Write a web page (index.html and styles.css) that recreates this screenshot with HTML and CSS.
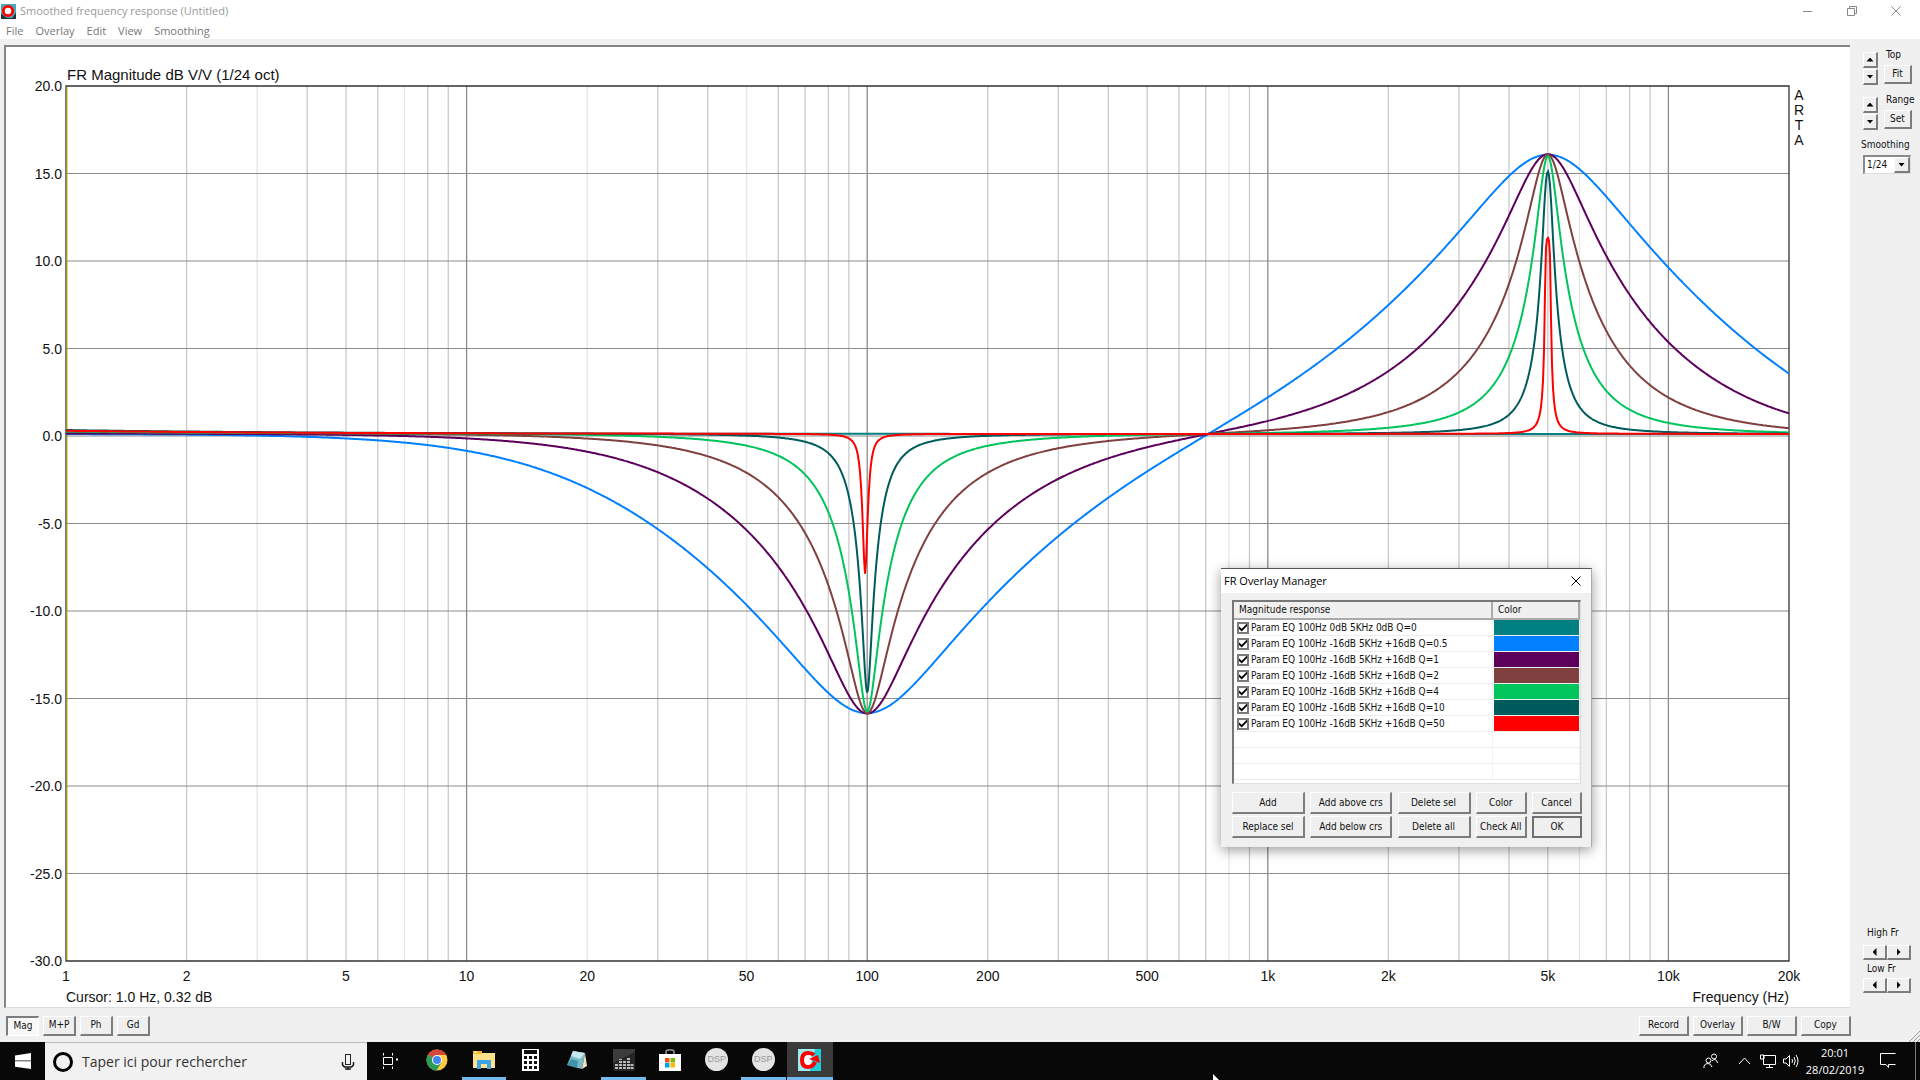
FILE: index.html
```
<!DOCTYPE html>
<html lang="en">
<head>
<meta charset="utf-8">
<title>Smoothed frequency response (Untitled)</title>
<link rel="stylesheet" href="styles.css">
</head>
<body>
<header class="titlebar">
  <svg class="app-icon" viewBox="0 0 16 16"><rect width="16" height="16" fill="#4aa8bf"/><path d="M0 10V16H16V9L12 15H6Z" fill="#26343d"/><circle cx="7.500" cy="7.500" r="5" fill="#fff" stroke="#f00" stroke-width="3"/></svg>
  <h1>Smoothed frequency response (Untitled)</h1>
  <div class="window-buttons">
    <button aria-label="Minimize"><svg viewBox="0 0 10 10"><path d="M0 5.500H9"/></svg></button>
    <button aria-label="Restore"><svg viewBox="0 0 10 10"><path d="M.5 2.500H7.500V9.500H.5ZM2.500 2.500V.5H9.500V7.500H7.500"/></svg></button>
    <button aria-label="Close"><svg viewBox="0 0 10 10"><path d="M.5 .5L9.500 9.500M9.500 .5L.5 9.500"/></svg></button>
  </div>
</header>
<nav class="menubar">
  <button>File</button><button>Overlay</button><button>Edit</button><button>View</button><button>Smoothing</button>
</nav>
<main class="workspace">
  <section class="left">
    <div class="chart-frame"><svg id="chart" role="img" aria-label="Frequency response"></svg></div>
    <div class="toolbar">
      <button class="btn pressed">Mag</button><button class="btn">M+P</button><button class="btn">Ph</button><button class="btn">Gd</button>
      <span class="spacer"></span>
      <button class="btn wide">Record</button><button class="btn wide">Overlay</button><button class="btn wide">B/W</button><button class="btn wide">Copy</button>
    </div>
  </section>
  <aside class="side">
    <div class="adjust">
      <div class="spin"><button class="btn" aria-label="Top up"><i class="up"></i></button><button class="btn" aria-label="Top down"><i class="down"></i></button></div>
      <div class="adjust-main"><span>Top</span><button class="btn">Fit</button></div>
    </div>
    <div class="adjust">
      <div class="spin"><button class="btn" aria-label="Range up"><i class="up"></i></button><button class="btn" aria-label="Range down"><i class="down"></i></button></div>
      <div class="adjust-main"><span>Range</span><button class="btn">Set</button></div>
    </div>
    <label class="smooth-label" for="smooth">Smoothing</label>
    <div class="combo"><select id="smooth"><option>1/24</option><option>1/12</option><option>1/6</option></select><span class="btn"><i class="down"></i></span></div>
    <div class="pair push">
      <span>High Fr</span>
      <div><button class="btn" aria-label="High left"><i class="lt"></i></button><button class="btn" aria-label="High right"><i class="rt"></i></button></div>
    </div>
    <div class="pair">
      <span>Low Fr</span>
      <div><button class="btn" aria-label="Low left"><i class="lt"></i></button><button class="btn" aria-label="Low right"><i class="rt"></i></button></div>
    </div>
    <svg class="grip" viewBox="0 0 12 12"><path d="M1 12L12 1M5 12L12 5M9 12L12 9"/></svg>
  </aside>
</main>

<section class="dialog" role="dialog" aria-labelledby="dlg-title">
  <div class="dialog-title"><h2 id="dlg-title">FR Overlay Manager</h2><button aria-label="Close dialog"><svg viewBox="0 0 10 10"><path d="M.5 .5L9.500 9.500M9.500 .5L.5 9.500"/></svg></button></div>
  <div class="list">
    <table>
      <thead><tr><th class="name">Magnitude response</th><th>Color</th></tr></thead>
      <tbody>
        <tr><td><label><input type="checkbox" checked>Param EQ 100Hz 0dB 5KHz 0dB Q=0</label></td><td><span class="swatch q0"></span></td></tr>
        <tr><td><label><input type="checkbox" checked>Param EQ 100Hz -16dB 5KHz +16dB Q=0.5</label></td><td><span class="swatch q05"></span></td></tr>
        <tr><td><label><input type="checkbox" checked>Param EQ 100Hz -16dB 5KHz +16dB Q=1</label></td><td><span class="swatch q1"></span></td></tr>
        <tr><td><label><input type="checkbox" checked>Param EQ 100Hz -16dB 5KHz +16dB Q=2</label></td><td><span class="swatch q2"></span></td></tr>
        <tr><td><label><input type="checkbox" checked>Param EQ 100Hz -16dB 5KHz +16dB Q=4</label></td><td><span class="swatch q4"></span></td></tr>
        <tr><td><label><input type="checkbox" checked>Param EQ 100Hz -16dB 5KHz +16dB Q=10</label></td><td><span class="swatch q10"></span></td></tr>
        <tr><td><label><input type="checkbox" checked>Param EQ 100Hz -16dB 5KHz +16dB Q=50</label></td><td><span class="swatch q50"></span></td></tr>
        <tr><td></td><td></td></tr>
        <tr><td></td><td></td></tr>
        <tr><td></td><td></td></tr>
      </tbody>
    </table>
  </div>
  <div class="dialog-buttons">
    <button class="btn">Add</button><button class="btn">Add above crs</button><button class="btn">Delete sel</button><button class="btn">Color</button><button class="btn">Cancel</button>
    <button class="btn">Replace sel</button><button class="btn">Add below crs</button><button class="btn">Delete all</button><button class="btn">Check All</button><button class="btn default">OK</button>
  </div>
</section>

<footer class="taskbar">
  <button class="start" aria-label="Start"><svg width="16" height="16" viewBox="0 0 16 16"><path fill="#fff" d="M0 2.500L16 0V7.500H0ZM0 8.300H16V16L0 13.800Z"/></svg></button>
  <label class="search">
    <svg width="22" height="22" viewBox="0 0 22 22"><circle cx="11" cy="11" r="8.500" fill="none" stroke="#000" stroke-width="3"/></svg>
    <input type="text" placeholder="Taper ici pour rechercher" aria-label="Taper ici pour rechercher">
    <svg width="14" height="16" viewBox="0 0 14 16" fill="none" stroke="#222"><rect x="4.500" y=".5" width="5" height="10"/><path d="M1.500 8V10.500Q2 13 5 13H9Q12 13 12.500 10.500V8M7 13V16M4 15H10" stroke-width="1.500"/></svg>
  </label>
  <button class="task-view" aria-label="Task view"><svg width="17" height="16" viewBox="0 0 17 16" fill="none" stroke="#fff"><path d="M1.500 4.500H10.500V11.500H1.500ZM1.500 0V2.500M10.500 2.500V0M1.500 16V13.500M10.500 13.500V16"/><path d="M14 6.500H16" stroke-width="2"/></svg></button>
  <div class="apps">
    <button aria-label="Chrome"><svg width="22" height="22" viewBox="0 0 22 22"><circle cx="11" cy="11" r="10.500" fill="#fc4"/><path d="M11 11L1.900 5.700A10.500 10.500 0 0 1 20.200 6H11Z" fill="#d5453a"/><path d="M11 11L1.900 5.700A10.500 10.500 0 0 0 10.500 21.500L15.500 13.500Z" fill="#2c9a59"/><circle cx="11" cy="11" r="5" fill="#fff"/><circle cx="11" cy="11" r="4" fill="#4285f4"/></svg></button>
    <button class="open" aria-label="Explorer"><svg width="22" height="20" viewBox="0 0 22 20"><path d="M0 1H9V3H22V18H0Z" fill="#fde28b"/><path d="M0 1H9V4H0Z" fill="#f4bd23"/><path d="M1 2H4" stroke="#fff"/><path d="M4 10H18V19H14V14H8V19H4Z" fill="#3aa5e4"/></svg></button>
    <button aria-label="Calculator"><svg width="17" height="22" viewBox="0 0 17 22"><rect width="17" height="22" fill="#fff"/><path d="M2 1H15V5H2Z" fill="#111"/><path d="M2 8.500H16M2 13.500H16M2 18.500H16" stroke="#111" stroke-width="3" stroke-dasharray="3 2"/></svg></button>
    <button aria-label="Notes"><svg width="22" height="22" viewBox="0 0 22 22"><path d="M7 2L19 4L16 20L1 16Z" fill="#79bccb"/><path d="M7 2L19 4L14 10L5 7Z" fill="#c6e8ef"/><path d="M19 4L21 17L16 20Z" fill="#eee3bd"/><path d="M5 10L12 12L11 19L1 16Z" fill="#4292aa"/></svg></button>
    <button class="open" aria-label="Equalizer"><svg width="22" height="22" viewBox="0 0 22 22"><rect width="22" height="22" rx="2" fill="#252627"/><path d="M0 0H22V3L0 14Z" fill="#3b3c3d"/><path d="M3.500 20V14M7.500 20V10M11.500 20V12M15.500 20V9M19 20V14" stroke="#bbb" stroke-width="3" stroke-dasharray="2 1"/></svg></button>
    <button aria-label="Store"><svg width="22" height="22" viewBox="0 0 22 22"><path d="M7 6V3Q7 1 9 1H13Q15 1 15 3V6" fill="none" stroke="#999" stroke-width="1.500"/><path d="M0 5H22V22H0Z" fill="#fff"/><path d="M6 9H10.500V13.500H6Z" fill="#f25022"/><path d="M11.500 9H16V13.500H11.500Z" fill="#7fba00"/><path d="M6 14H10.500V18.500H6Z" fill="#00a4ef"/><path d="M11.500 14H16V18.500H11.500Z" fill="#ffb900"/></svg></button>
    <button class="dsp"><span>DSP</span></button>
    <button class="dsp open"><span>DSP</span></button>
    <button class="open active" aria-label="ARTA"><svg width="23" height="22" viewBox="0 0 23 22"><rect width="23" height="22" fill="#20cdd8"/><path d="M0 0H17L12 22H0Z" fill="#9eeef0"/><path d="M6 5H13V17H6Z" fill="#fff"/><path d="M16 6Q14 4 10 4Q4 4 4 11Q4 18 10 18Q15 18 17 13" fill="none" stroke="#f00" stroke-width="4"/><path d="M11 10L20 6L22 14Z" fill="#f00"/></svg></button>
  </div>
  <svg class="pointer" width="8" height="6" viewBox="0 0 8 6"><path d="M0 0L6 6H0Z" fill="#fff"/></svg>
  <div class="tray">
    <button aria-label="People"><svg width="16" height="16" viewBox="0 0 16 16"><circle cx="5.500" cy="7.500" r="2.500"/><circle cx="11" cy="3.500" r="2.500"/><path d="M1 15V13Q2 10.500 5 10.500Q8 10.500 9 14M9 8Q10 6.500 12 6.500Q14 7 14.500 10"/></svg></button>
    <button aria-label="Hidden icons"><svg width="13" height="16" viewBox="0 0 13 16"><path d="M1 11L6.500 5L12 11"/></svg></button>
    <button aria-label="Network"><svg width="16" height="16" viewBox="0 0 16 16"><path d="M3.500 2.500H15.500V11.500H3.500ZM9.500 11.500V14.500M6 14.500H13M.5 2V6H4V2Z"/></svg></button>
    <button aria-label="Volume"><svg width="16" height="16" viewBox="0 0 16 16"><path d="M.5 6H3L6.500 2.500V13.500L3 10H.5ZM9 6Q10 8 9 10M11 4Q13.500 8 11 12M13 2Q17 8 13 14"/></svg></button>
    <time class="clock"><span>20:01</span><span>28/02/2019</span></time>
    <button class="action" aria-label="Notifications"><svg width="16" height="16" viewBox="0 0 16 16"><path d="M15.500 .5H.5V11.500H6L8.500 14.500V11.500H15.500"/></svg></button>
  </div>
</footer>
<script src="chart.js"></script>
</body>
</html>
```

FILE: styles.css
```
* { box-sizing: border-box; }
body {
  margin: 0;
  height: 100vh;
  display: flex;
  flex-direction: column;
  background: #f0f0f0;
  color: #111;
  font: 11px/14px "DejaVu Sans Condensed", "DejaVu Sans", sans-serif;
  overflow: hidden;
}
button, input, select { font: inherit; color: inherit; margin: 0; padding: 0; border: 0; background: none; border-radius: 0; }
h1, h2 { margin: 0; font-weight: normal; }
svg { display: block; }

.titlebar, .menubar { background: #fff; display: flex; font: 12px/16px "Open Sans", sans-serif; }
.titlebar { height: 22px; align-items: center; padding: 0 2px 0 1px; gap: 4px; color: #999; }
.titlebar h1 { font: inherit; font-size: 11px; }
.app-icon { width: 15px; height: 15px; }
.window-buttons { margin-left: auto; display: flex; }
.window-buttons button { width: 44px; height: 20px; display: grid; place-items: center; }
.window-buttons svg { width: 10px; height: 10px; fill: none; stroke: #888; }
.menubar { height: 17px; padding-left: 6px; gap: 12px; color: #777; font-size: 11px; }

.workspace { flex: 1; min-height: 0; display: flex; }
.left { flex: 1; min-width: 0; display: flex; flex-direction: column; padding: 6px 0 0 4px; }
.chart-frame {
  flex: 1; min-height: 0; background: #fff;
  border: 2px solid #858585; border-right: 0; border-bottom: 1px solid #ddd;
}
.chart-frame svg { width: 100%; height: 100%; }
.chart-frame text { font-family: "Liberation Sans", Arial, sans-serif; font-size: 14px; fill: #111; }
.chart-frame .chart-title { font-size: 15px; }
.toolbar { height: 34px; display: flex; align-items: center; gap: 4px; padding: 1px 0 0 2px; }
.toolbar .btn { width: 33px; height: 20px; }
.toolbar .btn.wide { width: 50px; }
.toolbar .btn:last-child { margin-right: -1px; }
.spacer { flex: 1; }

.btn {
  background: #efefef;
  border: 1px solid #fff;
  border-right: 2px solid #7d7d7d;
  border-bottom: 2px solid #7d7d7d;
  display: grid; place-items: center;
  white-space: nowrap;
  font-size: 10px; line-height: 12px;
}
.btn.pressed { background: #f8f8f8; border: 1px solid #fff; border-top: 2px solid #7d7d7d; border-left: 2px solid #7d7d7d; }
.btn.default { border: 2px solid #707070; }

.side { width: 70px; padding: 13px 9px 0 13px; display: flex; flex-direction: column; position: relative; font-size: 10px; }
.adjust { display: flex; gap: 6px; height: 45px; }
.spin { display: flex; flex-direction: column; gap: 1px; width: 15px; flex: none; }
.spin .btn { height: 16px; }
.adjust-main { display: flex; flex-direction: column; align-items: flex-start; line-height: 13px; margin-top: -4px; }
.adjust-main span { padding-left: 2px; height: 17px; }
.adjust-main .btn { width: 28px; height: 19px; }
.smooth-label { margin: -3px 0 0 -2px; height: 16px; line-height: 12px; }
.combo { display: grid; grid-template-columns: 1fr 16px; height: 19px; background: #fff; border: 2px solid #8a8a8a; border-right: 1px solid #ddd; border-bottom: 1px solid #ddd; }
.combo select { appearance: none; grid-area: 1 / 1 / 2 / 3; padding-left: 2px; }
.combo .btn { grid-area: 1 / 2; pointer-events: none; }
.pair span { display: block; padding-left: 4px; height: 16px; }
.pair div { display: flex; }
.pair .btn { width: 24px; height: 15px; }
.pair:last-of-type { height: 80px; }
.push { margin-top: auto; height: 36px; }
.push span { height: 19px; }
i { display: block; background: #000; }
i.up { width: 7px; height: 4px; clip-path: polygon(50% 0, 100% 100%, 0 100%); }
i.down { width: 7px; height: 4px; clip-path: polygon(0 0, 100% 0, 50% 100%); }
i.lt { width: 4px; height: 8px; clip-path: polygon(0 50%, 100% 0, 100% 100%); }
i.rt { width: 4px; height: 8px; clip-path: polygon(0 0, 100% 50%, 0 100%); }
.grip { position: absolute; right: 0; bottom: 0; width: 12px; height: 12px; stroke: #999; fill: none; }

.dialog {
  position: absolute; left: 1221px; top: 568px; width: 371px;
  background: #f0f0f0; border-top: 1px solid #555; border-right: 1px solid #aaa;
  box-shadow: 0 3px 12px rgba(0, 0, 0, .4);
  padding-bottom: 9px;
}
.dialog-title { height: 24px; background: #fff; display: flex; align-items: center; justify-content: space-between; padding: 0 10px 0 3px; }
.dialog-title h2 { font: 12px/16px "Open Sans", sans-serif; font-size: 11px; color: #000; }
.dialog-title svg { width: 10px; height: 10px; stroke: #000; fill: none; }
.list { margin: 7px 10px 8px 11px; height: 184px; overflow: hidden; background: #fff; border: 2px solid #777; border-right: 1px solid #ddd; border-bottom: 1px solid #ddd; }
table { width: 100%; border-collapse: collapse; table-layout: fixed; font-size: 10px; line-height: 12px; }
th { height: 17px; padding: 0 0 0 5px; text-align: left; font-weight: normal; background: #f0f0f0; border-right: 2px solid #aaa; border-bottom: 2px solid #aaa; }
th.name { width: 258px; }
td { height: 16px; padding: 0; border-bottom: 1px solid #eee; border-right: 1px solid #f3f3f3; }
td label { display: flex; align-items: center; gap: 2px; padding-left: 3px; white-space: nowrap; }
td input { appearance: none; width: 12px; height: 12px; border: 2px solid #7a7a7a; background: #fff; display: grid; place-items: center; }
td input:checked::after { content: ""; width: 8px; height: 8px; background: #000; clip-path: polygon(0 38%, 35% 65%, 100% 0, 100% 32%, 35% 100%, 0 70%); }
.swatch { display: block; height: 15px; margin-left: 1px; }
.q0 { background: #008080; }
.q05 { background: #0080ff; }
.q1 { background: #5c005c; }
.q2 { background: #804040; }
.q4 { background: #00c45c; }
.q10 { background: #005c5c; }
.q50 { background: #f00; }
.dialog-buttons { display: grid; grid-template-columns: 73px 82px 73px 51px 50px; justify-content: space-between; gap: 2px 0; padding: 0 9px 0 11px; }
.dialog-buttons .btn { height: 22px; }

.taskbar { height: 38px; flex: none; background: #080808; display: flex; align-items: stretch; position: relative; font-family: "Open Sans", sans-serif; }
.taskbar button { display: grid; place-items: center; }
.start { width: 45px; }
.search { width: 322px; background: #f1f1f1; border-top: 1px solid #bbb; display: flex; align-items: center; gap: 8px; padding: 0 12px 0 7px; }
.search input { flex: 1; min-width: 0; font-size: 14px; line-height: 20px; }
.search input::placeholder { color: #333; opacity: 1; }
.task-view { width: 47px; }
.apps { width: 419px; display: flex; }
.apps button { flex: 1; border-bottom: 3px solid transparent; }
.apps .open { border-image: linear-gradient(90deg, transparent 4px, #76b9ed 4px, #76b9ed 43px, transparent 43px) 3; }
.apps .active { background: #3b3b3b; border-image: none; border-color: #76b9ed; }
.dsp span { width: 23px; height: 23px; border-radius: 50%; background: #e4e4e4; color: #999; font: 9px/23px "Liberation Sans", sans-serif; text-align: center; }
.pointer { position: absolute; left: 1213px; bottom: 0; }
.tray { margin-left: auto; display: flex; align-items: center; color: #fff; padding-right: 4px; }
.tray svg { fill: none; stroke: #fff; }
.tray button { width: 23px; height: 38px; }
.tray button:first-child { width: 45px; }
.clock { width: 66px; display: flex; flex-direction: column; text-align: center; font-size: 11px; line-height: 17px; }
.tray .action { width: 48px; border-right: 1px solid #777; padding-right: 7px; }
```

FILE: chart.js
```
const NS = 'http://www.w3.org/2000/svg';
const svg = document.getElementById('chart');
const FMAX = 20000, DBTOP = 20, DBBOT = -30;
const overlays = [
  { q: 0, color: '#008080', rise: 0.1 },
  { q: 0.5, color: '#0080ff', rise: 0.0 },
  { q: 1, color: '#5c005c', rise: 0.03 },
  { q: 2, color: '#804040', rise: 0.12 },
  { q: 4, color: '#00c45c', rise: 0.14 },
  { q: 10, color: '#005c5c', rise: 0.22, low: -14.8, high: 15.0 },
  { q: 50, color: '#ff0000', rise: 0.18, low: -8, high: 11.2, notch: 98.8 }
];
const faint = [3, 7, 20, 50, 800, 6000];

function add(name, attrs, text) {
  const el = document.createElementNS(NS, name);
  for (const k in attrs) el.setAttribute(k, attrs[k]);
  if (text !== undefined) el.textContent = text;
  svg.appendChild(el);
}

// Peaking filter power at f, with bilinear warping for a 96 kHz sample rate
function peak(f, f0, q) {
  const w = Math.tan(Math.PI * f / 96000) / Math.tan(Math.PI * f0 / 96000);
  const u = w - 1 / w, a = Math.pow(10, 16 / 40);
  return (u * u + (a / q) ** 2) / (u * u + (1 / (a * q)) ** 2);
}

// Response in dB, averaged over 1/24 octave
function smoothed(o, f) {
  let sum = 0;
  const n = 12;
  for (let i = -n; i <= n; i++) {
    const g = f * Math.pow(2, i / n / 48);
    sum += peak(g, 5000, o.q) / peak(g, o.notch || 100, o.q);
  }
  return 10 * Math.log10(sum / (2 * n + 1));
}

for (const o of overlays) {
  if (!o.high) continue;
  o.up = o.high / smoothed(o, 5000);
  o.down = o.low / smoothed(o, o.notch || 100);
}

function level(o, f) {
  const base = 0.12 + o.rise / Math.pow(f, 0.7);
  if (!o.q) return base;
  const db = smoothed(o, f);
  if (!o.high) return db + base;
  return db * (db > 0 ? o.up : o.down) + base;
}

function draw() {
  svg.replaceChildren();
  const W = svg.clientWidth, H = svg.clientHeight;
  const L = 60, R = W - 61, T = 39, B = H - 46;
  const px = f => L + (R - L) * Math.log10(f) / Math.log10(FMAX);
  const py = d => T + (B - T) * (DBTOP - d) / (DBTOP - DBBOT);

  for (let dec = 1; dec <= 10000; dec *= 10) {
    for (let m = 1; m < 10; m++) {
      const f = dec * m;
      if (f <= 1 || f >= FMAX) continue;
      const stroke = m === 1 ? '#8c8c8c' : faint.includes(f) ? '#e6e6e6' : '#cacaca';
      add('line', { x1: px(f), x2: px(f), y1: T, y2: B, stroke, 'stroke-width': 1.3 });
    }
  }
  for (let d = DBBOT; d <= DBTOP; d += 5) {
    if (d > DBBOT && d < DBTOP) add('line', { x1: L, x2: R, y1: py(d), y2: py(d), stroke: '#8c8c8c', 'stroke-width': 1.2 });
    add('text', { x: L - 4, y: py(d) + 5, 'text-anchor': 'end' }, d.toFixed(1));
  }
  add('path', { d: `M${L} ${T}H${R}V${B}H${L}Z`, fill: 'none', stroke: '#333', 'stroke-width': 1.3 });
  add('line', { x1: L + 1, x2: L + 1, y1: T + 1, y2: B - 1, stroke: '#b4b400' });

  for (const o of overlays) {
    let d = '';
    for (let x = L; x <= R; x += 1) {
      const f = Math.pow(FMAX, (x - L) / (R - L));
      d += (d ? 'L' : 'M') + x.toFixed(1) + ' ' + py(level(o, f)).toFixed(1);
    }
    add('path', { d, fill: 'none', stroke: o.color, 'stroke-width': 2 });
  }

  const ticks = { 1: '1', 2: '2', 5: '5', 10: '10', 20: '20', 50: '50', 100: '100', 200: '200', 500: '500',
    1000: '1k', 2000: '2k', 5000: '5k', 10000: '10k', 20000: '20k' };
  for (const f in ticks) add('text', { x: px(+f), y: B + 20, 'text-anchor': 'middle' }, ticks[f]);
  add('text', { x: L + 1, y: T - 6, class: 'chart-title' }, 'FR Magnitude dB V/V (1/24 oct)');
  add('text', { x: L, y: B + 41 }, 'Cursor: 1.0 Hz, 0.32 dB');
  add('text', { x: R, y: B + 41, 'text-anchor': 'end' }, 'Frequency (Hz)');
  'ARTA'.split('').forEach((c, i) => add('text', { x: R + 10, y: T + 14 + i * 15, 'text-anchor': 'middle' }, c));
}

draw();
window.addEventListener('resize', draw);
```
